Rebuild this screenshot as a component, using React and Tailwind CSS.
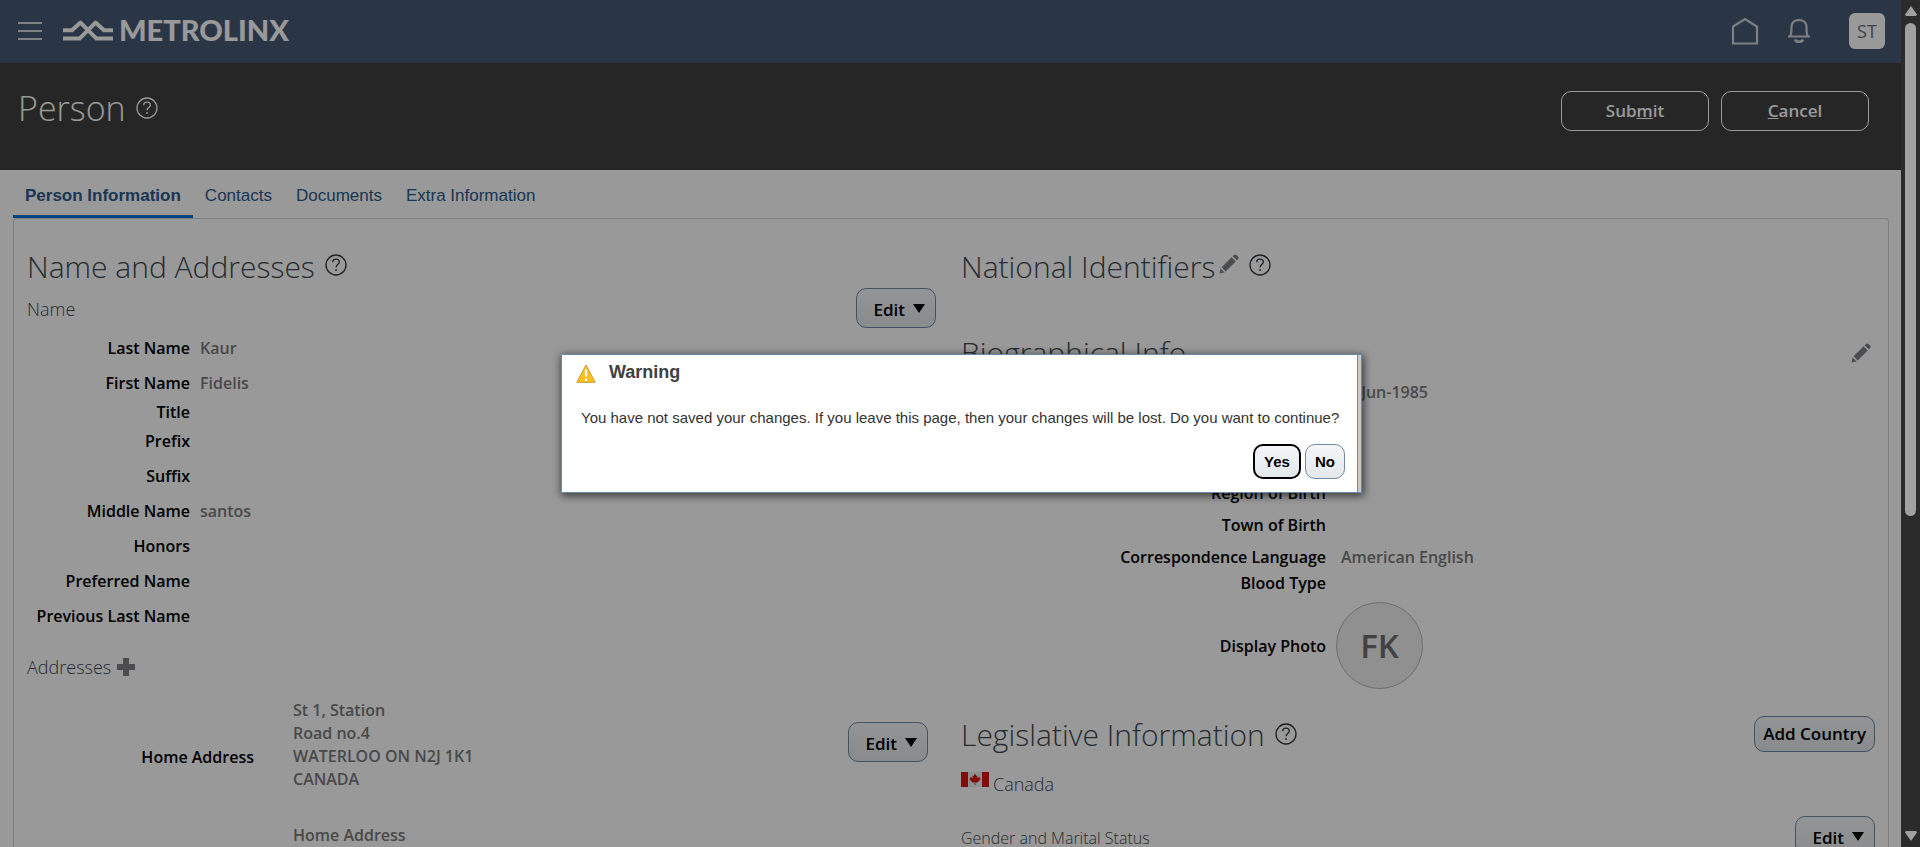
const HelpIcon = ({ className = "" }) => (
  <svg viewBox="0 0 22 22" fill="none" stroke="currentColor" className={"size-[22px] shrink-0 " + className}>
    <circle cx="11" cy="11" r="10" strokeWidth="1.3" />
    <path d="M7.7 8.2c0-2 1.4-3.1 3.3-3.1s3.3 1.1 3.3 2.9c0 2.4-3.2 2.6-3.2 5.2" strokeWidth="1.3" />
    <path d="M10.2 16h1.7" strokeWidth="1.6" />
  </svg>
);

const Pencil = ({ className = "" }) => (
  <svg viewBox="0 0 20 20" fill="currentColor" className={"size-5 shrink-0 text-[#7d8185] " + className}>
    <path d="M0.5 19.5 1.6 14.4 5.6 18.4ZM2.6 13.3 12.6 3.3 16.7 7.4 6.7 17.4ZM13.7 2.2 15 0.9q1.2-1 2.4 0l1.7 1.7q1 1.2 0 2.4L17.8 6.3Z" />
  </svg>
);

const Question = ({ label, className }) => (
  <button type="button" aria-label={label} className={className}>
    <HelpIcon />
  </button>
);

const EditButton = () => (
  <button
    type="button"
    className="flex h-10 items-center gap-2 rounded-[10px] border border-[#6f8aa5] bg-linear-to-b from-[#f4f6f8] to-[#e4e8eb] pt-1 pr-2.5 pl-4 text-[17px] leading-6 font-semibold text-black"
  >
    Edit
    <svg viewBox="0 0 12 9" className="mb-1 h-[9px] w-3" fill="currentColor">
      <path d="M0 0H12L6 9Z" />
    </svg>
  </button>
);

const Row = ({ label, value, size = "h-[35px]" }) => (
  <div className={"flex items-center gap-2.5 " + size}>
    <dt className="w-[163px] text-right font-semibold text-black">{label}</dt>
    <dd className="font-semibold text-[#7a7a7a]">{value}</dd>
  </div>
);

const BioRow = ({ label, children, size }) => (
  <div className={"flex items-center gap-[15px] " + size}>
    <dt className="w-[365px] text-right font-semibold text-black">{label}</dt>
    <dd className="font-semibold text-[#7a7a7a]">{children}</dd>
  </div>
);

const nameRows = [
  { label: "Last Name", value: "Kaur" },
  { label: "First Name", value: "Fidelis" },
  { label: "Title", size: "h-6" },
  { label: "Prefix", size: "h-[34px]" },
  { label: "Suffix" },
  { label: "Middle Name", value: "santos" },
  { label: "Honors" },
  { label: "Preferred Name" },
  { label: "Previous Last Name" },
];

const heading = "text-[30px] leading-10 font-light text-[#404a50]";
const subheading = "text-[18px] leading-6 font-light text-[#404a50]";

function TopBar() {
  return (
    <header className="flex h-[63px] shrink-0 items-center bg-[#465975] pr-4 pb-0.5 pl-[18px] text-[#d2d6dc]">
      <button type="button" aria-label="Menu">
        <svg viewBox="0 0 24 18" className="h-[18px] w-6" stroke="currentColor" strokeWidth="2">
          <path d="M0 1H24M0 9H24M0 17H24" />
        </svg>
      </button>
      <a href="#home" className="ml-[21px] flex items-center gap-1.5 text-white">
        <svg viewBox="0 0 50 21" className="h-[21px] w-[50px]" fill="none" stroke="currentColor" strokeWidth="4" strokeLinejoin="round">
          <path d="M0 10.2H9L17.5 2.6 33.5 18.6H50" />
          <path d="M0 18.6H16.5L32.5 2.6 41 10.2H50" />
        </svg>
        <span className="mb-0.5 font-['Lato'] text-[29px] leading-8 font-black">METROLINX</span>
      </a>
      <div className="ml-auto flex items-center">
        <a href="#home" aria-label="Home">
          <svg viewBox="0 0 28 28" className="size-7" fill="none" stroke="currentColor" strokeWidth="2.2">
            <path d="M2 26.5V9.5L14 2 26 9.5V26.5Z" />
          </svg>
        </a>
        <button type="button" aria-label="Notifications" className="ml-7">
          <svg viewBox="0 0 24 26" className="h-[26px] w-6" fill="none" stroke="currentColor" strokeWidth="2.2">
            <path d="M1 18.5H23M3 18.5C4.5 16.5 4.5 13.5 4.5 9.5C4.5 4.5 7.5 2 12 2S19.5 4.5 19.5 9.5C19.5 13.5 19.5 16.5 21 18.5" />
            <path d="M8 21.5C9 24.5 15 24.5 16 21.5" strokeWidth="2.6" />
          </svg>
        </button>
        <button type="button" className="ml-[38px] size-9 rounded-md bg-white text-[18px] leading-6 text-[#6f6f6f]">
          ST
        </button>
      </div>
    </header>
  );
}

function TitleBar() {
  const button = "h-10 w-[148px] rounded-[10px] border border-white text-[17px] leading-6 font-semibold text-white";
  return (
    <div className="flex h-[107px] shrink-0 items-start bg-[#404040] pt-5 pr-8 pl-[18px] text-white">
      <h1 className="text-[34px] leading-[50px] font-light">Person</h1>
      <Question label="Help for Person" className="mt-[14px] ml-2.5" />
      <div className="mt-2 ml-auto flex gap-3">
        <button type="button" className={button}>
          Sub<u>m</u>it
        </button>
        <button type="button" className={button}>
          <u>C</u>ancel
        </button>
      </div>
    </div>
  );
}

function Tabs() {
  return (
    <nav className="mx-[13px] flex h-12 items-start pt-3 font-['Liberation_Sans'] text-[17px] leading-7 text-[#2c5a8c]">
      <a href="#info" className="h-9 border-b-3 border-[#0572ce] px-3 font-bold">
        Person Information
      </a>
      <a href="#contacts" className="px-3">Contacts</a>
      <a href="#documents" className="px-3">Documents</a>
      <a href="#extra" className="px-3">Extra Information</a>
    </nav>
  );
}

function NameAndAddresses() {
  return (
    <section className="w-[909px] shrink-0">
      <div className="flex items-start">
        <h2 className={heading}>Name and Addresses</h2>
        <Question label="Help for Name and Addresses" className="mt-[7px] ml-2.5 text-[#303538]" />
      </div>
      <div className="flex h-9 items-start justify-between">
        <h3 className={subheading + " mt-2.5"}>Name</h3>
        <div className="mt-px">
          <EditButton />
        </div>
      </div>
      <dl className="mt-[7px]">
        {nameRows.map((row) => (
          <Row key={row.label} {...row} />
        ))}
      </dl>
      <div className="mt-[22px] flex items-center gap-1.5">
        <h3 className={subheading}>Addresses</h3>
        <button type="button" aria-label="Add address" className="text-[#7d8185]">
          <svg viewBox="0 0 18 18" className="size-[18px]" fill="currentColor">
            <path d="M6 0H12V6H18V12H12V18H6V12H0V6H6Z" />
          </svg>
        </button>
      </div>
      <div className="mt-5 flex items-center pr-2">
        <div className="w-[227px] pt-[23px] text-right font-semibold text-black">Home Address</div>
        <address className="ml-[39px] leading-[23px] font-semibold text-[#7a7a7a] not-italic">
          St 1, Station
          <br />
          Road no.4
          <br />
          WATERLOO ON N2J 1K1
          <br />
          CANADA
        </address>
        <div className="mb-1.5 ml-auto">
          <EditButton />
        </div>
      </div>
      <div className="mt-8 ml-[266px] font-semibold text-[#7a7a7a]">Home Address</div>
    </section>
  );
}

function CanadaFlag() {
  return (
    <svg viewBox="0 0 28 15" className="h-[15px] w-7">
      <path fill="#eee" d="M0 0H28V15H0Z" />
      <path fill="#d81414" d="M0 0H7V15H0ZM21 0H28V15H21Z" />
      <path fill="#d81414" d="M14 1.5 15.3 4 16.5 3.4 16.2 6.2 18.5 4.8 19 6.5 19.5 7.5 16.3 10.4 14.4 10.2V13H13.6V10.2L11.7 10.4 8.5 7.5 9 6.5 9.5 4.8 11.8 6.2 11.5 3.4 12.7 4Z" />
    </svg>
  );
}

function Details() {
  return (
    <section className="min-w-0 flex-1">
      <div className="flex items-start">
        <h2 className={heading}>National Identifiers</h2>
        <button type="button" aria-label="Edit national identifiers" className="mt-[7px] ml-1">
          <Pencil />
        </button>
        <Question label="Help for National Identifiers" className="mt-[7px] ml-2.5 text-[#303538]" />
      </div>
      <div className="mt-[46px] flex items-start justify-between">
        <h2 className={heading}>Biographical Info</h2>
        <button type="button" aria-label="Edit biographical info" className="mt-2.5 mr-1">
          <Pencil />
        </button>
      </div>
      <dl>
        <div className="mt-0.5 flex h-[34px] items-center pl-[395px]">
          <dd className="font-semibold text-[#7a7a7a]">-Jun-1985</dd>
        </div>
        <div className="pt-[68px]">
          <BioRow label="Region of Birth" size="h-8" />
        </div>
        <BioRow label="Town of Birth" size="h-8" />
        <BioRow label="Correspondence Language" size="h-8">American English</BioRow>
        <BioRow label="Blood Type" size="h-5" />
        <div className="mt-[9px] flex items-center gap-2.5">
          <dt className="w-[365px] text-right font-semibold text-black">Display Photo</dt>
          <dd className="flex size-[87px] items-center justify-center rounded-full border border-[#b8b8b8] bg-[#f0f0f0] text-[33px] leading-10 font-semibold text-[#6f6f6f]">
            FK
          </dd>
        </div>
      </dl>
      <div className="mt-[26px] flex items-start">
        <h2 className={heading}>Legislative Information</h2>
        <Question label="Help for Legislative Information" className="mt-2 ml-2.5 text-[#303538]" />
        <button
          type="button"
          className="mt-px ml-auto h-9 rounded-[10px] border border-[#6f8aa5] bg-linear-to-b from-[#f4f6f8] to-[#e4e8eb] px-2 text-[17px] leading-6 font-semibold text-black"
        >
          Add Country
        </button>
      </div>
      <div className="mt-[17px] flex items-start gap-1">
        <CanadaFlag />
        <h3 className={subheading}>Canada</h3>
      </div>
      <div className="mt-5 flex items-start justify-between">
        <h4 className="mt-2.5 text-[16px] leading-6 font-light text-[#404a50]">Gender and Marital Status</h4>
        <EditButton />
      </div>
    </section>
  );
}

function WarningDialog() {
  return (
    <div className="absolute inset-0 flex items-start justify-center bg-black/40 pt-[354px] pl-[22px] font-['Liberation_Sans',sans-serif]">
      <div
        role="alertdialog"
        aria-labelledby="warning-title"
        aria-describedby="warning-text"
        className="w-[801px] border border-[#6f8aa5] bg-linear-to-r from-[#e8e8e8] to-[#c8c8c8] pr-[3px] shadow-[1px_2px_8px_1px_rgba(0,0,0,0.6)]"
      >
        <div className="border-r border-[#6f8aa5] bg-white pt-[5px] pr-3 pb-[13px] pl-[14px]">
          <div className="flex items-start gap-[13px]">
            <svg viewBox="0 0 20 19" className="mt-1 h-[19px] w-5">
              <path d="M10 1 19.2 18.3H0.8Z" fill="#fbc01d" stroke="#c99c33" strokeLinejoin="round" />
              <path d="M10 5.5V12.5M10 14.5V17" stroke="#fff" strokeWidth="2.2" />
            </svg>
            <h2 id="warning-title" className="text-[18px] leading-6 font-bold text-[#404040]">Warning</h2>
          </div>
          <p id="warning-text" className="mt-6 pl-[5px] text-[15px] leading-5 whitespace-nowrap text-[#333]">
            You have not saved your changes. If you leave this page, then your changes will be lost. Do you want to continue?
          </p>
          <div className="mt-4 flex justify-end gap-1 font-bold text-black">
            <button type="button" className="h-[35px] w-12 rounded-[10px] border-2 border-black bg-linear-to-b from-[#f4f6f8] to-[#e4e8eb] text-[15px]">
              Yes
            </button>
            <button type="button" className="h-[35px] w-10 rounded-[10px] border border-[#6f8aa5] bg-linear-to-b from-[#f4f6f8] to-[#e4e8eb] text-[15px]">
              No
            </button>
          </div>
        </div>
      </div>
    </div>
  );
}

function ScrollBar() {
  return (
    <div className="flex w-[19px] shrink-0 flex-col items-center bg-[#2b2b2b] py-1.5 text-[#a0a0a0]">
      <svg viewBox="0 0 12 10" className="h-2.5 w-3" fill="currentColor">
        <path d="M6 0 12 8.5 11 10H1L0 8.5Z" />
      </svg>
      <div className="mt-[7px] h-[493px] w-[11px] rounded-full bg-[#a0a0a0]" />
      <svg viewBox="0 0 12 10" className="mt-auto h-2.5 w-3" fill="currentColor">
        <path d="M6 10 12 1.5 11 0H1L0 1.5Z" />
      </svg>
    </div>
  );
}

export default function App() {
  return (
    <div className="flex h-screen overflow-hidden bg-white font-['Open_Sans',sans-serif] text-[16px] leading-6">
      <div className="relative flex min-w-0 flex-1 flex-col overflow-hidden">
        <TopBar />
        <TitleBar />
        <Tabs />
        <main className="mr-3 ml-[13px] flex min-h-0 flex-1 gap-[25px] overflow-hidden rounded-t-sm border border-b-0 border-[#d0d5da] px-[13px] pt-7">
          <NameAndAddresses />
          <Details />
        </main>
        <WarningDialog />
      </div>
      <ScrollBar />
    </div>
  );
}
